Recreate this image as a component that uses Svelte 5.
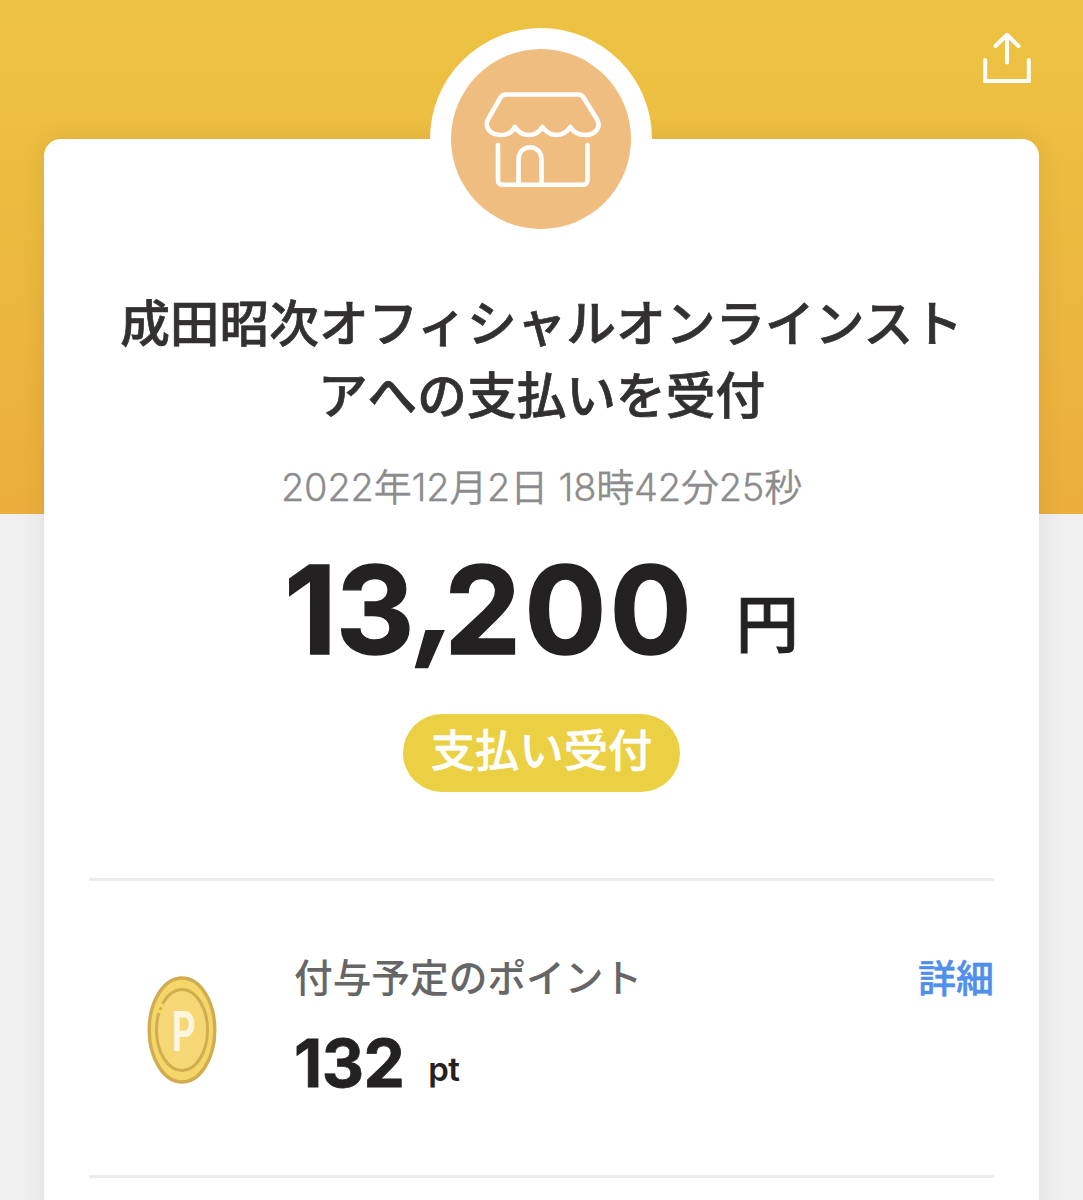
<script>
	let shop = '成田昭次オフィシャルオンラインストアへの支払いを受付';
	let date = '2022年12月2日 18時42分25秒';
	let amount = 13200;
	let points = 132;

	let [thousands, rest] = amount.toLocaleString('en-US').split(',');
</script>

<div class="page">
	<button class="share" type="button" aria-label="共有">
		<svg width="48" height="52" viewBox="0 0 48 52" fill="none" stroke="#fff" stroke-width="4" stroke-linecap="round">
			<path d="M2.2 28V49H45.8V28" />
			<path d="M24 30.5V2.8M12.5 14L24 2.8L35.5 14" stroke-linejoin="round" />
		</svg>
	</button>

	<main class="card">
		<div class="avatar">
			<div class="avatar__inner">
				<svg width="180" height="180" viewBox="0 0 180 180" fill="none" stroke="#fff" stroke-width="4.6" stroke-linecap="round" stroke-linejoin="round">
					<path d="M55 45.5H127Q130.5 45.5 132.5 48.5L145.5 69.5C151 78 144.5 86 134.5 86Q124 86 119.3 78Q114 86 105.5 86Q97 86 91.5 78Q86.5 86 78 86Q69 86 64 78Q59.5 86 50 86C39 86 32.5 78 37.5 69.5L49.5 48.5Q51.5 45.5 55 45.5Z" />
					<path d="M47 96V131Q47 135.8 52 135.8H131.5Q136.5 135.8 136.5 131V96" />
					<path d="M67.5 135.5V111C67.5 94 90.5 94 90.5 111V135.5" />
				</svg>
			</div>
		</div>

		<h1 class="title">{shop}</h1>
		<p class="date">{date}</p>
		<p class="amount">
			<span class="amount__high">{thousands}</span><span class="amount__comma">,</span><span class="amount__low">{rest}</span><span class="amount__unit">円</span>
		</p>
		<span class="status">支払い受付</span>

		<section class="points">
			<svg class="points__coin" width="70" height="108" viewBox="0 0 70 108" fill="none">
				<ellipse cx="35" cy="54" rx="32.8" ry="52" fill="#f4d768" stroke="#d0ad50" stroke-width="3.4" />
				<ellipse cx="35" cy="54" rx="25.5" ry="40.5" fill="#f5d875" stroke="#d0ad50" stroke-width="3" />
				<path d="M11.5 37L16 28" stroke="#f4d768" stroke-width="5" />
				<circle cx="13.6" cy="32.5" r="1.5" fill="#d0ad50" />
				<text class="points__mark" transform="translate(25 75) scale(0.67 1)">P</text>
			</svg>
			<div class="points__info">
				<p class="points__label">付与予定のポイント</p>
				<p class="points__value">{points}<span class="points__unit">pt</span></p>
			</div>
			<a class="points__link" href="#detail">詳細</a>
		</section>
	</main>
</div>

<style>
	:global(body) {
		background: #f0f0f0;
	}
	.page {
		box-sizing: border-box;
		position: relative;
		height: 1200px;
		padding: 139px 44px 0;
		overflow: hidden;
		background: linear-gradient(#edc343, #ebae3c) no-repeat 0 0 / 100% 514px;
		font-family: Inter, "Noto Sans CJK JP", sans-serif;
		color: #232122;
	}
	.share {
		position: absolute;
		top: 32px;
		right: 52px;
		padding: 0;
		border: 0;
		background: none;
		cursor: pointer;
	}
	.share svg {
		display: block;
	}
	.card {
		box-sizing: border-box;
		position: relative;
		display: flex;
		flex-direction: column;
		align-items: center;
		height: 1100px;
		padding: 145px 45px 0;
		border-radius: 17px;
		background: #fff;
		box-shadow: 0 0 26px rgba(0, 0, 0, 0.08);
	}
	.avatar {
		position: absolute;
		top: -111px;
		left: calc(50% - 0.5px);
		width: 180px;
		padding: 21px;
		border-radius: 50%;
		background: #fff;
		transform: translateX(-50%);
	}
	.avatar__inner {
		height: 180px;
		border-radius: 50%;
		background: #efbd80;
	}
	.title {
		width: 850px;
		margin: 0;
		font-family: "Noto Sans CJK JP", sans-serif;
		font-size: 49.7px;
		font-weight: 500;
		line-height: 72px;
		text-align: center;
		word-break: break-all;
		color: #323031;
		-webkit-text-stroke: 0.7px #323031;
	}
	.date {
		margin: 30px 0 0;
		font-size: 38px;
		font-weight: 350;
		line-height: 58px;
		letter-spacing: -0.2px;
		color: #8c8c8c;
		-webkit-text-stroke: 0.3px #8c8c8c;
	}
	.amount {
		margin: 19px 0 0;
		font-size: 122px;
		font-weight: 700;
		line-height: 150px;
		white-space: nowrap;
		-webkit-text-stroke: 1.4px #232122;
	}
	.amount__high {
		letter-spacing: -1px;
	}
	.amount__comma {
		display: inline-block;
		margin-right: -10px;
		transform: translate(4px, -10px) skewX(-8deg);
	}
	.amount__low {
		letter-spacing: 3px;
	}
	.amount__unit {
		margin-left: 41px;
		font-size: 63px;
		font-weight: 500;
		line-height: 1;
		vertical-align: 7px;
		-webkit-text-stroke: 0.8px #232122;
	}
	.status {
		margin-top: 29px;
		padding: 0 28px 4px;
		border-radius: 39px;
		background: #ebd044;
		font-size: 44.3px;
		font-weight: 500;
		line-height: 74px;
		color: #fff;
		-webkit-text-stroke: 0.5px #fff;
	}
	.points {
		box-sizing: border-box;
		display: flex;
		align-items: flex-start;
		width: 100%;
		height: 300px;
		margin-top: 86px;
		padding-top: 70px;
		border-top: 3px solid #ececec;
		border-bottom: 3px solid #ececec;
	}
	.points__coin {
		margin: 25px 0 0 58px;
	}
	.points__mark {
		font-family: Roboto, sans-serif;
		font-size: 55px;
		font-weight: 700;
		fill: #fff6df;
	}
	.points__info {
		flex: 1;
		margin-left: 77px;
	}
	.points__label {
		margin: 0;
		font-size: 38.7px;
		font-weight: 500;
		line-height: 54px;
		color: #666;
	}
	.points__value {
		margin: 16px 0 0;
		font-size: 65.6px;
		font-weight: 700;
		line-height: 84px;
		letter-spacing: -0.6px;
		-webkit-text-stroke: 0.8px #232122;
	}
	.points__unit {
		margin-left: 24px;
		font-size: 33px;
		font-weight: 600;
		line-height: 1;
		vertical-align: 6px;
		-webkit-text-stroke: 0;
	}
	.points__link {
		font-size: 38px;
		font-weight: 500;
		line-height: 54px;
		color: #5090ec;
		text-decoration: none;
		-webkit-text-stroke: 0.5px #5090ec;
	}
</style>
